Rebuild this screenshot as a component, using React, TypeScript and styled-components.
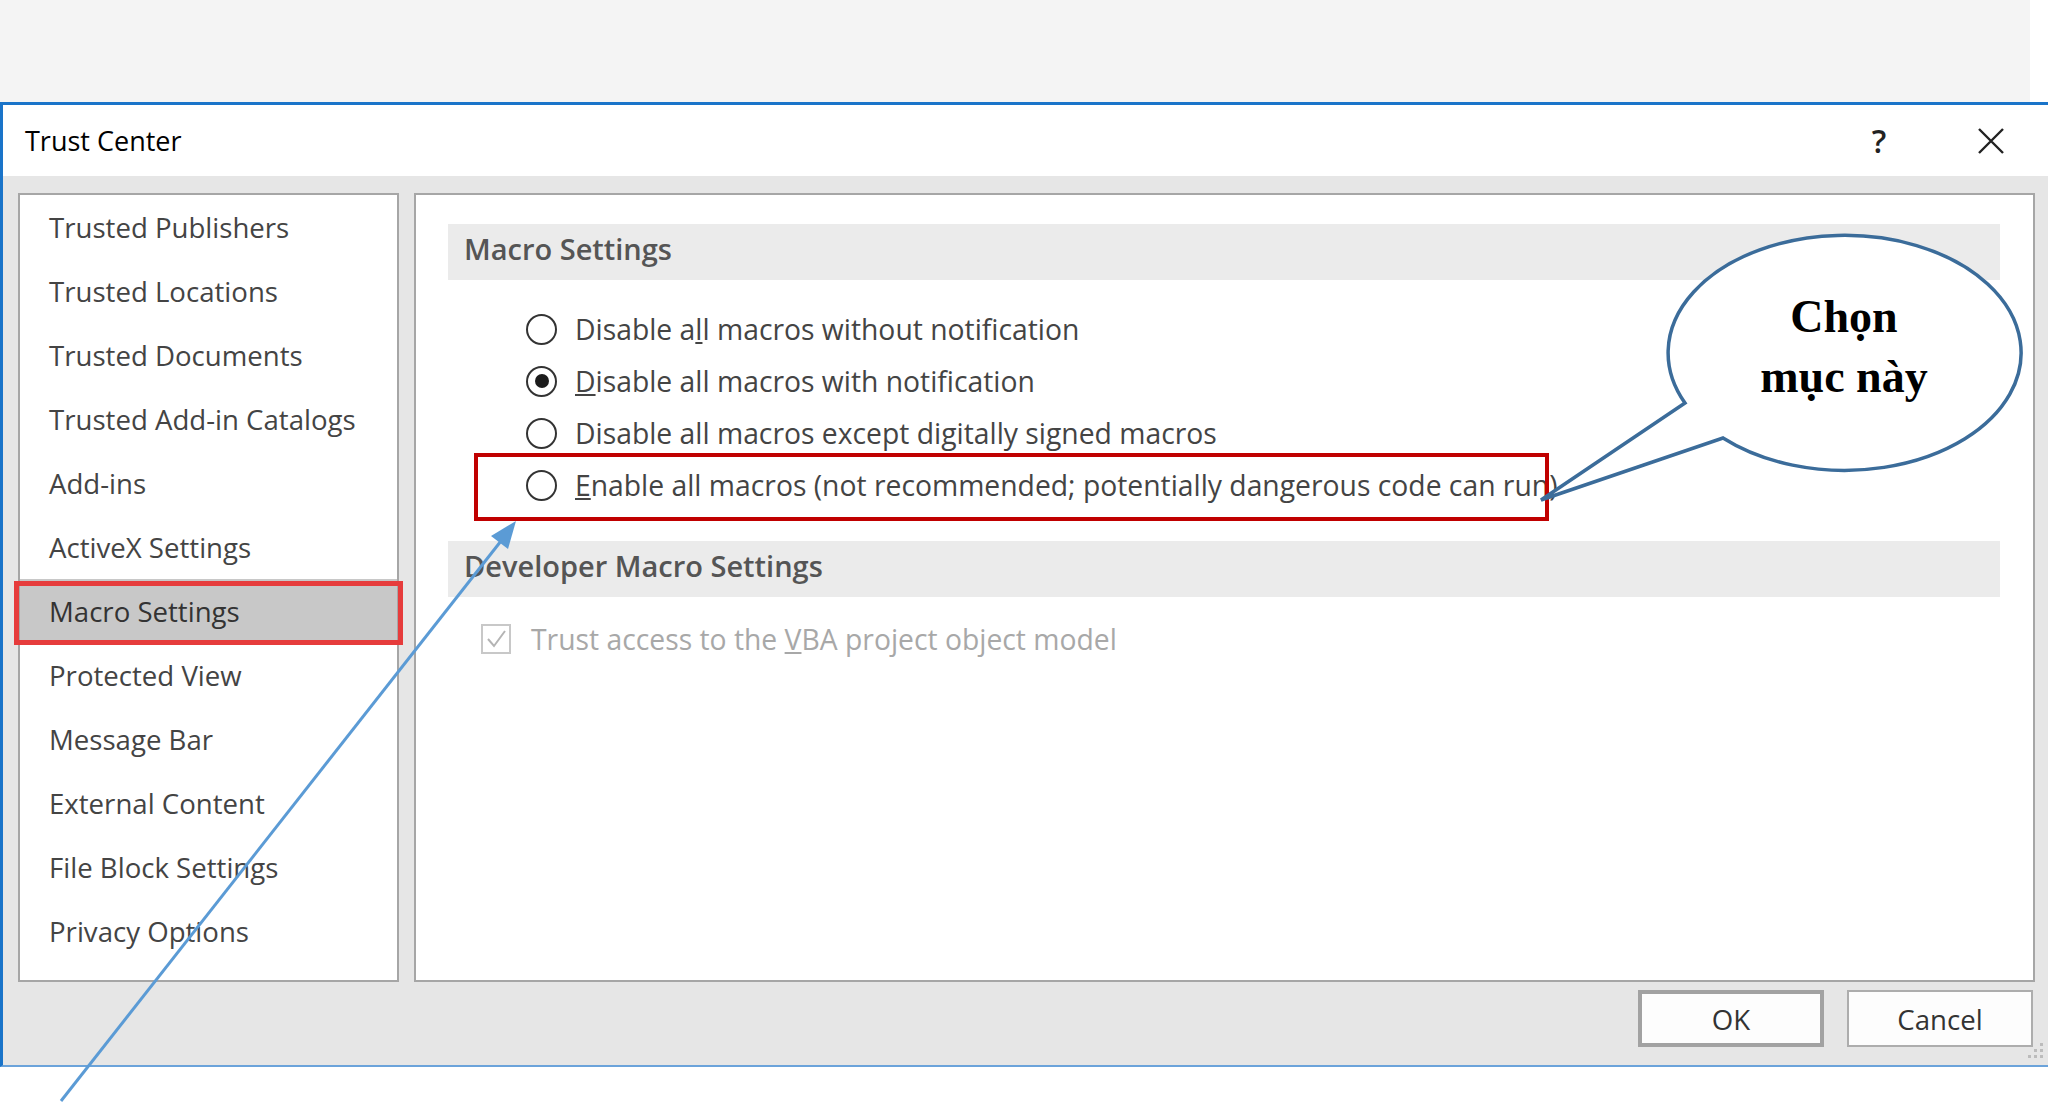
import React from 'react';
import styled, { createGlobalStyle } from 'styled-components';

const GlobalStyle = createGlobalStyle`
  html, body {
    margin: 0;
    padding: 0;
    background: #ffffff;
  }
  body {
    width: 2048px;
    height: 1113px;
    overflow: hidden;
    font-family: "Open Sans", "Noto Sans", sans-serif;
  }
  * {
    box-sizing: border-box;
  }
`;

const Page = styled.div`
  position: relative;
  width: 2048px;
  height: 1113px;
  display: flex;
  flex-direction: column;
`;

const TopBand = styled.div`
  flex: none;
  width: 2030px;
  height: 102px;
  background: #f4f4f4;
`;

const Dialog = styled.div`
  flex: none;
  display: flex;
  flex-direction: column;
  height: 965px;
  background: #e6e6e6;
  border-top: 3px solid #1a74c9;
  border-left: 3px solid #1a74c9;
  border-bottom: 2px solid #6ba3da;
`;

const TitleBar = styled.div`
  flex: none;
  display: flex;
  align-items: center;
  height: 71px;
  padding: 0 27px 0 22px;
  background: #ffffff;
`;

const Title = styled.div`
  flex: 1;
  font-size: 27px;
  line-height: 71px;
  color: #000000;
`;

const TitleButton = styled.div`
  width: 60px;
  height: 60px;
  display: flex;
  align-items: center;
  justify-content: center;
  font-size: 32px;
  font-weight: 600;
  color: #222222;
  & + & {
    margin-left: 52px;
  }
`;

const Body = styled.div`
  flex: none;
  display: flex;
  gap: 15px;
  height: 806px;
  padding: 17px 13px 0 15px;
`;

const NavPanel = styled.div`
  flex: none;
  width: 381px;
  background: #ffffff;
  border: 2px solid #a6a6a6;
`;

const NavItem = styled.div<{ $selected?: boolean }>`
  position: relative;
  height: 64px;
  padding-left: 29px;
  font-size: 27.6px;
  line-height: 64px;
  color: ${(p) => (p.$selected ? '#333333' : '#444444')};
  background: ${(p) => (p.$selected ? '#c8c8c8' : 'transparent')};
  white-space: nowrap;
`;

const NavMark = styled.span`
  position: absolute;
  top: 2px;
  bottom: -2px;
  left: -6px;
  right: -6px;
  border: 5px solid #e63c3c;
`;

const ContentPanel = styled.div`
  flex: 1;
  background: #ffffff;
  border: 2px solid #a6a6a6;
  padding: 29px 33px 0 32px;
`;

const SectionHeader = styled.div<{ $gap?: number }>`
  height: 56px;
  margin-top: ${(p) => p.$gap ?? 0}px;
  padding: 0 0 6px 16px;
  background: #ebebeb;
  font-size: 29px;
  font-weight: 600;
  line-height: 50px;
  color: #555555;
`;

const OptionList = styled.div`
  display: flex;
  flex-direction: column;
  align-items: flex-start;
  margin-top: 23px;
  padding-left: 78px;
`;

const OptionRow = styled.label`
  position: relative;
  display: flex;
  align-items: center;
  gap: 18px;
  height: 52px;
  font-size: 28.3px;
  color: #444444;
  white-space: nowrap;
`;

const Radio = styled.span<{ $checked?: boolean }>`
  flex: none;
  position: relative;
  width: 31px;
  height: 31px;
  border: 2px solid #333333;
  border-radius: 50%;
  &::after {
    content: '';
    display: ${(p) => (p.$checked ? 'block' : 'none')};
    position: absolute;
    top: 6.5px;
    left: 6.5px;
    width: 14px;
    height: 14px;
    border-radius: 50%;
    background: #1c1c1c;
  }
`;

const RowMark = styled.span`
  position: absolute;
  top: -6px;
  bottom: -10px;
  left: -52px;
  right: 8px;
  border: 4px solid #c00000;
`;

const CheckRow = styled.label`
  display: flex;
  align-items: center;
  gap: 20px;
  height: 52px;
  margin-top: 16px;
  padding-left: 33px;
  font-size: 28.3px;
  color: #a8a8a8;
  white-space: nowrap;
`;

const CheckBox = styled.span`
  flex: none;
  display: flex;
  align-items: center;
  justify-content: center;
  width: 30px;
  height: 30px;
  border: 2px solid #c8c8c8;
`;

const Footer = styled.div`
  position: relative;
  flex: 1;
  display: flex;
  justify-content: flex-end;
  align-items: flex-start;
  gap: 23px;
  padding: 8px 15px 0 0;
`;

const Button = styled.div<{ $default?: boolean }>`
  width: 186px;
  height: 57px;
  display: flex;
  align-items: center;
  justify-content: center;
  background: #fdfdfd;
  border: ${(p) => (p.$default ? '4px solid #a2a2a2' : '2px solid #adadad')};
  font-size: 27.6px;
  color: #333333;
`;

const Grip = styled.svg`
  position: absolute;
  right: 4px;
  bottom: 6px;
`;

const Overlay = styled.svg`
  position: absolute;
  top: 0;
  left: 0;
  pointer-events: none;
`;

const navItems = [
  'Trusted Publishers',
  'Trusted Locations',
  'Trusted Documents',
  'Trusted Add-in Catalogs',
  'Add-ins',
  'ActiveX Settings',
  'Macro Settings',
  'Protected View',
  'Message Bar',
  'External Content',
  'File Block Settings',
  'Privacy Options',
];

const App = () => (
  <Page>
    <GlobalStyle />
    <TopBand />
    <Dialog>
      <TitleBar>
        <Title>Trust Center</Title>
        <TitleButton>?</TitleButton>
        <TitleButton>
          <svg width="28" height="28" viewBox="0 0 28 28">
            <path d="M2 2 L26 26 M26 2 L2 26" stroke="#222" strokeWidth="2.4" fill="none" />
          </svg>
        </TitleButton>
      </TitleBar>
      <Body>
        <NavPanel>
          {navItems.map((item) => (
            <NavItem key={item} $selected={item === 'Macro Settings'}>
              {item}
              {item === 'Macro Settings' && <NavMark />}
            </NavItem>
          ))}
        </NavPanel>
        <ContentPanel>
          <SectionHeader>Macro Settings</SectionHeader>
          <OptionList>
            <OptionRow>
              <Radio />
              <span>
                Disable a<u>l</u>l macros without notification
              </span>
            </OptionRow>
            <OptionRow>
              <Radio $checked />
              <span>
                <u>D</u>isable all macros with notification
              </span>
            </OptionRow>
            <OptionRow>
              <Radio />
              <span>
                Disable all macros except di<u>g</u>itally signed macros
              </span>
            </OptionRow>
            <OptionRow>
              <Radio />
              <span>
                <u>E</u>nable all macros (not recommended; potentially dangerous code can run)
              </span>
              <RowMark />
            </OptionRow>
          </OptionList>
          <SectionHeader $gap={30}>Developer Macro Settings</SectionHeader>
          <CheckRow>
            <CheckBox>
              <svg width="22" height="22" viewBox="0 0 22 22">
                <path d="M3 11 L9 18 L20 3" stroke="#b4b4b4" strokeWidth="2" fill="none" />
              </svg>
            </CheckBox>
            <span>
              Trust access to the <u>V</u>BA project object model
            </span>
          </CheckRow>
        </ContentPanel>
      </Body>
      <Footer>
        <Button $default>OK</Button>
        <Button>Cancel</Button>
        <Grip width="20" height="18" viewBox="0 0 20 18">
          <rect x="16" y="2" width="3" height="3" fill="#bcbcbc" />
          <rect x="16" y="8" width="3" height="3" fill="#bcbcbc" />
          <rect x="10" y="8" width="3" height="3" fill="#bcbcbc" />
          <rect x="16" y="14" width="3" height="3" fill="#bcbcbc" />
          <rect x="10" y="14" width="3" height="3" fill="#bcbcbc" />
          <rect x="4" y="14" width="3" height="3" fill="#bcbcbc" />
        </Grip>
      </Footer>
    </Dialog>
    <Overlay width="2048" height="1113" viewBox="0 0 2048 1113">
      <line x1="61" y1="1101" x2="501" y2="541" stroke="#5b9bd5" strokeWidth="3" />
      <polygon points="516,521 508,549 491,536" fill="#5b9bd5" />
      <path
        d="M 1685 403 A 176.5 117.5 0 1 1 1723 438 L 1541 500 Z"
        fill="#ffffff"
        stroke="#3b6c9a"
        strokeWidth="3.5"
        strokeLinejoin="miter"
      />
      <text
        x="1844"
        y="332"
        textAnchor="middle"
        fontFamily='"Liberation Serif", "Times New Roman", serif'
        fontWeight="bold"
        fontSize="46"
        fill="#000"
      >
        Chọn
      </text>
      <text
        x="1844"
        y="392"
        textAnchor="middle"
        fontFamily='"Liberation Serif", "Times New Roman", serif'
        fontWeight="bold"
        fontSize="46"
        fill="#000"
      >
        mục này
      </text>
    </Overlay>
  </Page>
);

export default App;
